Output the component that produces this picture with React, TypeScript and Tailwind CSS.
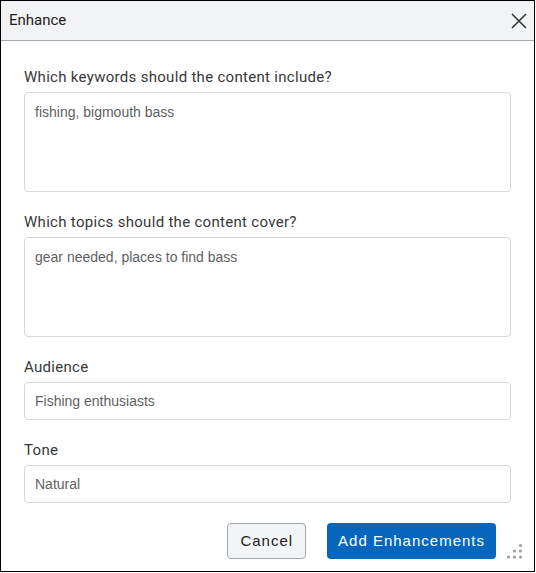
function Field({ label, value, tall }: { label: string; value: string; tall?: boolean }) {
  return (
    <div className="flex flex-col">
      <label className="text-[15px] leading-[18px] text-[#383838] tracking-[0.3px] font-['Roboto',sans-serif]">
        {label}
      </label>
      <div
        className={`mt-[6px] rounded-[4px] border border-[#d4d7dc] px-[10px] text-[14px] text-[#5f5f5f] font-['Liberation_Sans',Arial,sans-serif] ${
          tall ? "h-[100px] pt-[9px]" : "h-[38px] flex items-center"
        }`}
      >
        {value}
      </div>
    </div>
  );
}

export default function App() {
  return (
    <div className="w-[535px] h-[572px] border border-black bg-white flex flex-col">
      <header className="h-[40px] shrink-0 flex items-center justify-between bg-[#f2f3f4] border-b border-[#a3a8ae] pl-[8px] pr-[7px]">
        <span className="text-[15px] text-[#222] font-['Roboto',sans-serif]">Enhance</span>
        <svg width="16" height="16" viewBox="0 0 16 16" stroke="#333" strokeWidth="1.5" fill="none">
          <path d="M1 1L15 15M15 1L1 15" />
        </svg>
      </header>

      <div className="flex-1 flex flex-col px-[23px] pt-[27px]">
        <Field label="Which keywords should the content include?" value="fishing, bigmouth bass" tall />
        <div className="h-[21px]" />
        <Field label="Which topics should the content cover?" value="gear needed, places to find bass" tall />
        <div className="h-[21px]" />
        <Field label="Audience" value="Fishing enthusiasts" />
        <div className="h-[21px]" />
        <Field label="Tone" value="Natural" />

        <div className="relative flex justify-end gap-[21px] mt-[20px] pr-[15px]">
          <button className="h-[36px] px-[12px] rounded-[4px] border border-[#a1a6ad] bg-[#f3f4f6] text-[15px] text-[#222] tracking-[1px] font-['Liberation_Sans',Arial,sans-serif]">
            Cancel
          </button>
          <button className="h-[36px] px-[11px] rounded-[4px] bg-[#0467bd] text-[15px] text-white tracking-[1px] font-['Liberation_Sans',Arial,sans-serif]">
            Add Enhancements
          </button>
          <svg
            className="absolute right-[-12px] bottom-0"
            width="16"
            height="16"
            viewBox="0 0 16 16"
            fill="#9aa0a6"
          >
            <circle cx="13.5" cy="2.5" r="1.6" />
            <circle cx="7.5" cy="8" r="1.6" />
            <circle cx="13.5" cy="8" r="1.6" />
            <circle cx="1.5" cy="14" r="1.6" />
            <circle cx="7.5" cy="14" r="1.6" />
            <circle cx="13.5" cy="14" r="1.6" />
          </svg>
        </div>
      </div>
    </div>
  );
}
